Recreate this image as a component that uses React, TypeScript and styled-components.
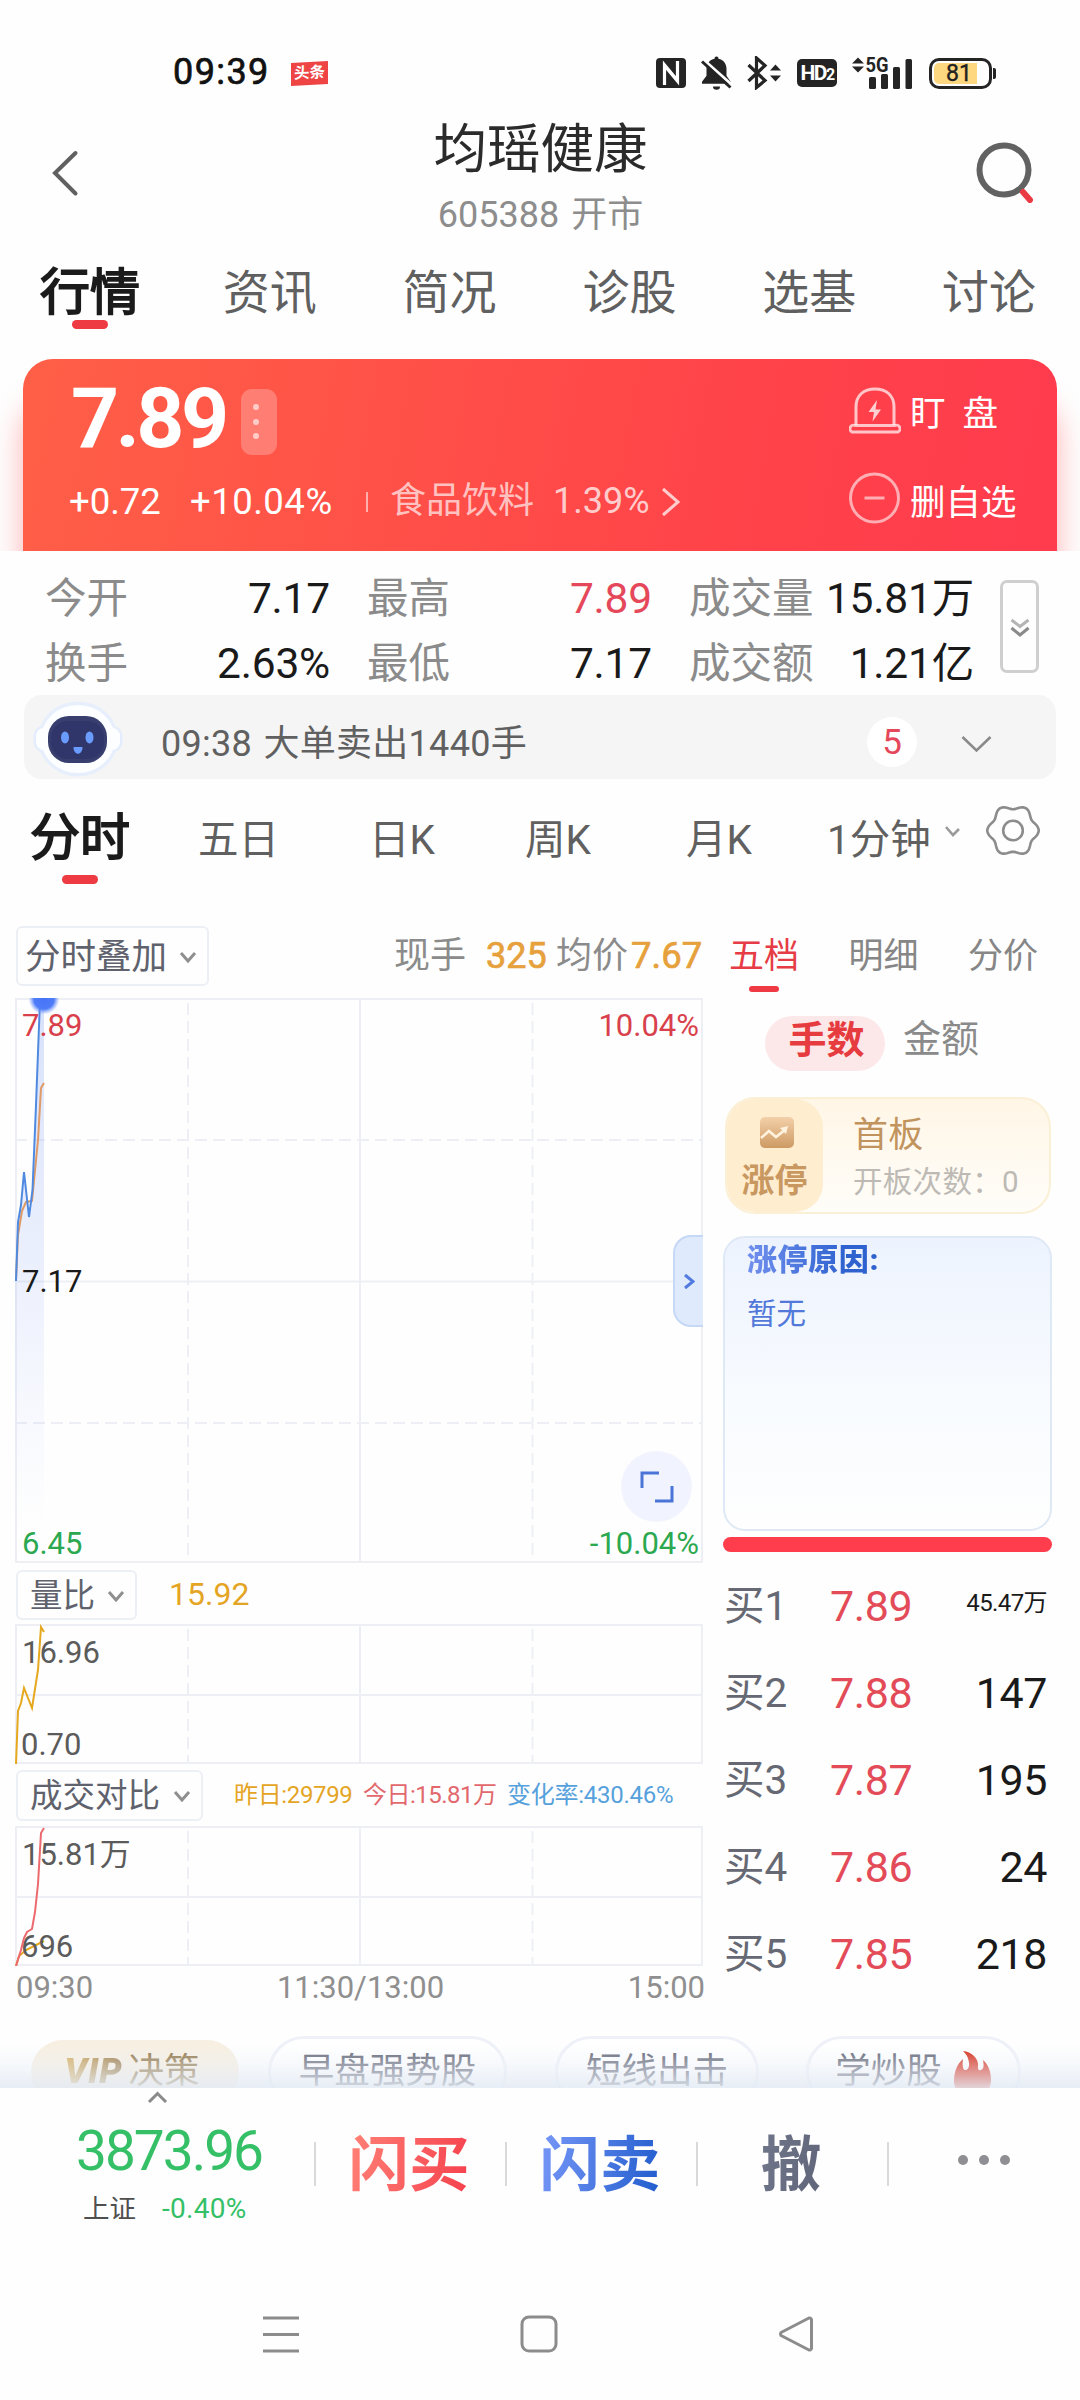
import React from "react";
import styled, { createGlobalStyle, css } from "styled-components";

const GlobalStyle = createGlobalStyle`
  * { box-sizing: border-box; }
  html, body { margin: 0; padding: 0; background: #fff; }
  body {
    width: 1080px;
    font-family: Roboto, "Noto Sans CJK SC", sans-serif;
    color: #1a1a1a;
  }
  svg { display: block; flex: none; }
`;

const Screen = styled.main`
  width: 1080px;
  height: 2400px;
  overflow: hidden;
  background: #fefefe;
  display: flex;
  flex-direction: column;
`;

interface TextProps {
  $size: number;
  $color?: string;
  $stroke?: number;
  $spacing?: number;
  $width?: number;
  $left?: number;
}

const Text = styled.span<TextProps>`
  display: block;
  flex: none;
  white-space: nowrap;
  line-height: 1.1;
  font-size: ${(p) => p.$size}px;
  color: ${(p) => p.$color ?? "#1a1a1a"};
  letter-spacing: ${(p) => p.$spacing ?? 0}px;
  margin-left: ${(p) => p.$left ?? 0}px;
  ${(p) => p.$stroke && css`-webkit-text-stroke: ${p.$stroke}px currentColor;`}
  ${(p) => p.$width && css`width: ${p.$width}px;`}
`;

/* ---------- status bar ---------- */

const StatusBar = styled.header`
  height: 110px;
  padding: 36px 84px 0 173px;
  display: flex;
  align-items: center;
  justify-content: space-between;
`;
const StatusGroup = styled.div<{ $gap: number }>`
  display: flex;
  align-items: center;
  gap: ${(p) => p.$gap}px;
`;
const NewsBadge = styled.div`
  width: 37px;
  height: 23px;
  margin-left: 20px;
  background: #ee4444;
  color: #fff;
  font-size: 15.5px;
  font-weight: 700;
  line-height: 23px;
  text-align: center;
  transform: skewY(-3deg);
`;
const HdBadge = styled.div`
  width: 40px;
  height: 28px;
  margin-left: 1px;
  border-radius: 5px;
  background: #242424;
  color: #fff;
  font-size: 21px;
  font-weight: 700;
  line-height: 29px;
  text-align: center;
  letter-spacing: -1.5px;
  small { font-size: 16px; }
`;
const Battery = styled.div`
  position: relative;
  width: 63px;
  height: 31px;
  margin-right: 4px;
  border: 3px solid #242424;
  border-radius: 10px;
  padding: 2px;
  &::after {
    content: "";
    position: absolute;
    right: -7px;
    top: 7px;
    width: 3px;
    height: 11px;
    border-radius: 0 2px 2px 0;
    background: #242424;
  }
`;
const BatteryLevel = styled.div`
  width: 43px;
  height: 21px;
  border-radius: 5px 0 0 5px;
  background: #fdd880;
  font-size: 23px;
  -webkit-text-stroke: 0.4px currentColor;
  line-height: 22px;
  padding-left: 12px;
  color: #222;
`;

/* ---------- title ---------- */

const TitleBar = styled.div`
  height: 135px;
  padding: 11px 46px 0 52px;
  display: flex;
  justify-content: space-between;
`;
const TitleBlock = styled.div`
  margin-left: 26px;
  padding-top: 1px;
  display: flex;
  flex-direction: column;
  align-items: center;
`;
const Title = styled.h1`
  margin: 0;
  font-size: 53.500px;
  font-weight: 400;
  line-height: 56px;
  color: #2b2b2b;
`;
const SubTitle = styled.div`
  margin-top: 17px;
  font-size: 36px;
  line-height: 40px;
  color: #8d8d8d;
  word-spacing: 3px;
`;
const BackIcon = styled.svg`margin-top: 28px;`;
const SearchIcon = styled.svg`margin-top: 20px;`;

/* ---------- top tabs ---------- */

const Tabs = styled.nav`
  height: 100px;
  padding: 18px 1px 0 0;
  display: grid;
  grid-template-columns: repeat(6, 1fr);
`;
const Tab = styled.div<{ $active?: boolean }>`
  display: flex;
  flex-direction: column;
  align-items: center;
  line-height: 60px;
  font-size: ${(p) => (p.$active ? 50 : 47)}px;
  -webkit-text-stroke: ${(p) => (p.$active ? 1.8 : 0)}px currentColor;
  color: ${(p) => (p.$active ? "#1b1b1b" : "#606060")};
`;
const Underline = styled.i<{ $w?: number; $h?: number; $top?: number }>`
  width: ${(p) => p.$w ?? 36}px;
  height: ${(p) => p.$h ?? 9}px;
  margin-top: ${(p) => p.$top ?? -3}px;
  border-radius: 5px;
  background: #ee3a42;
`;

/* ---------- price card ---------- */

const CardClip = styled.section`
  height: 206px;
  padding: 14px 23px 0;
  overflow: hidden;
`;
const PriceCard = styled.div`
  height: 220px;
  border-radius: 30px;
  background: linear-gradient(100deg, #ff5f47 0%, #ff5148 35%, #ff4349 68%, #ff3b4e 100%);
  box-shadow: 0 44px 30px 0 rgba(255, 70, 75, 0.42);
  display: flex;
  justify-content: space-between;
  padding: 0 0 0 48px;
`;
const PriceLeft = styled.div`padding-top: 30px;`;
const PriceRow = styled.div`
  height: 66px;
  display: flex;
  align-items: flex-start;
`;
const Price = styled.div`
  width: 170px;
  padding-top: 1px;
  font-size: 84px;
  font-weight: 700;
  line-height: 57px;
  letter-spacing: -3.6px;
  color: #fff;
`;
const MoreButton = styled.div`
  width: 36px;
  height: 66px;
  padding: 15px 6px 16px 0;
  border-radius: 11px;
  background: rgba(255, 255, 255, 0.24);
  display: flex;
  flex-direction: column;
  align-items: center;
  justify-content: space-between;
  i { width: 6px; height: 6px; border-radius: 50%; background: rgba(255, 255, 255, 0.6); }
`;
const ChangeRow = styled.div`
  height: 40px;
  margin-top: 27px;
  margin-left: -2px;
  display: flex;
  align-items: center;
`;
const ChangeDivider = styled.i`
  width: 2px;
  height: 20px;
  margin: 0 22px 0 31px;
  background: rgba(255, 255, 255, 0.55);
`;
const PriceRight = styled.div`
  width: 208px;
  padding-top: 26px;
`;
const CardAction = styled.div<{ $top?: number; $textTop?: number; $word?: number }>`
  height: 52px;
  margin-top: ${(p) => p.$top ?? 0}px;
  display: flex;
  align-items: center;
  gap: 9px;
  font-size: 35.5px;
  line-height: 40px;
  color: #fff;
  span { margin-top: ${(p) => p.$textTop ?? 0}px; letter-spacing: ${(p) => p.$word ?? 0}px; white-space: nowrap; }
`;

/* ---------- stats ---------- */

const Stats = styled.section`
  height: 144px;
  padding: 15px 41px 0 45px;
  display: flex;
  justify-content: space-between;
`;
const StatGrid = styled.div`
  display: grid;
  grid-template-columns: 110px 175px 37px 110px 175px 37px 124px 161px;
  grid-template-rows: 65px 65px;
  align-items: center;
  line-height: 48px;
`;
const StatLabel = styled.span`
  padding-top: 1px;
  font-size: 41.500px;
  color: #8b8b8b;
  white-space: nowrap;
`;
const StatValue = styled.span<{ $red?: boolean }>`
  font-size: 42.500px;
  text-align: right;
  white-space: nowrap;
  letter-spacing: -0.2px;
  color: ${(p) => (p.$red ? "#e4485a" : "#1a1a1a")};
`;
const ExpandButton = styled.div`
  width: 39px;
  height: 93px;
  margin-top: 14px;
  border: 3px solid #cfcfcf;
  border-radius: 7px;
  display: flex;
  align-items: center;
  justify-content: center;
`;

/* ---------- robot bar ---------- */

const RobotBar = styled.section`
  height: 84px;
  flex: none;
  margin: 0 24px;
  padding: 0 64px 0 9px;
  border-radius: 18px;
  background: #f5f5f5;
  display: flex;
  align-items: center;
`;
const RobotText = styled.div`
  flex: 1;
  margin: 13px 0 0 38px;
  font-size: 36px;
  line-height: 40px;
  letter-spacing: 0.3px;
  word-spacing: 2px;
  color: #606060;
`;
const CountBadge = styled.div`
  width: 50px;
  height: 50px;
  margin: 10px 44px 0 0;
  border-radius: 50%;
  background: #fff;
  color: #e4485a;
  font-size: 35px;
  line-height: 51px;
  text-align: center;
`;
const RobotChevron = styled.svg`margin-top: 14px;`;

/* ---------- period tabs ---------- */

const Periods = styled.nav`
  height: 126px;
  flex: none;
  padding: 32px 0 0 30px;
  display: flex;
  color: #606060;
`;
const ActivePeriod = styled.div`
  width: 168px;
  font-size: 50px;
  -webkit-text-stroke: 1.8px currentColor;
  line-height: 54px;
  color: #1b1b1b;
  display: flex;
  flex-direction: column;
  i { margin-left: 32px; }
`;
const Period = styled.div<{ $w: number }>`
  width: ${(p) => p.$w}px;
  font-size: 40.500px;
  line-height: 58px;
  white-space: nowrap;
`;
const PeriodCaret = styled.svg`margin-top: 14px;`;
const GearSlot = styled.div`
  height: 53px;
  margin: -7px 0 0 -1px;
`;

/* ---------- main area ---------- */

const Main = styled.div`
  height: 1115px;
  flex: none;
  display: flex;
  padding: 0 0 0 16px;
`;
const ChartColumn = styled.div`
  width: 707px;
  padding-top: 21px;
`;
const ToolRow = styled.div<{ $h: number; $after: number }>`
  width: 688px;
  height: ${(p) => p.$h}px;
  margin-bottom: ${(p) => p.$after}px;
  display: flex;
  align-items: center;
`;
const SelectBox = styled.div<{ $w: number; $size: number; $pad: number }>`
  flex: none;
  width: ${(p) => p.$w}px;
  height: 100%;
  padding: 1px 10px 0 ${(p) => p.$pad}px;
  border: 2px solid #eceff4;
  border-radius: 6px;
  display: flex;
  align-items: center;
  justify-content: space-between;
  font-size: ${(p) => p.$size}px;
  line-height: 40px;
  color: #5f626d;
  white-space: nowrap;
`;
const Quote = styled.div`
  margin-left: auto;
  padding-top: 1px;
  display: flex;
  align-items: center;
`;
const ChartFrame = styled.div<{ $h: number; $after?: number }>`
  position: relative;
  left: -1px;
  width: 688px;
  height: ${(p) => p.$h}px;
  margin-bottom: ${(p) => p.$after ?? 0}px;
`;
const DrawerHandle = styled.div`
  position: absolute;
  right: 0;
  top: 237px;
  width: 30px;
  height: 92px;
  border: 2px solid #c5d8f5;
  border-right: 0;
  border-radius: 18px 0 0 18px;
  background: #dfeafc;
  display: flex;
  align-items: center;
  justify-content: center;
`;
const FullscreenButton = styled.div`
  position: absolute;
  left: 606px;
  top: 453px;
  width: 71px;
  height: 71px;
  border-radius: 50%;
  background: #f1f4fe;
  display: flex;
  align-items: center;
  justify-content: center;
`;
const AxisRow = styled.div`
  width: 689px;
  height: 36px;
  margin-top: 4px;
  display: flex;
  justify-content: space-between;
  font-size: 31px;
  line-height: 36px;
  color: #8f8f8f;
`;

const BookColumn = styled.aside`
  width: 329px;
  padding-top: 28px;
`;
const BookTabs = styled.div`
  height: 80px;
  padding: 0 14px 0 6px;
  display: flex;
  justify-content: space-between;
`;
const BookTab = styled.div<{ $active?: boolean }>`
  display: flex;
  flex-direction: column;
  align-items: center;
  font-size: 35px;
  line-height: 48px;
  color: ${(p) => (p.$active ? "#e63c46" : "#868686")};
`;
const UnitSwitch = styled.div`
  height: 56px;
  padding-left: 42px;
  display: flex;
  gap: 18px;
  line-height: 53px;
  font-size: 38px;
  color: #8a8a8a;
`;
const UnitPill = styled.div`
  width: 120px;
  height: 55px;
  margin-top: 3px;
  padding-left: 3px;
  border-radius: 28px;
  background: #fde8e9;
  color: #e63c40;
  font-weight: 700;
  line-height: 49px;
  text-align: center;
`;
const LimitCard = styled.div`
  height: 117px;
  margin: 28px 1px 22px 2px;
  border: 2px solid #fbf0d6;
  border-radius: 30px;
  background: linear-gradient(#fff6e6, #fffdf9);
  display: flex;
  overflow: hidden;
`;
const LimitBadge = styled.div`
  width: 97px;
  margin-left: -1px;
  border-radius: 28px;
  background: #ffedd0;
  display: flex;
  flex-direction: column;
  align-items: center;
  padding-top: 18px;
  font-size: 33px;
  font-weight: 700;
  line-height: 36px;
  color: #c89860;
  svg { margin: 0 0 15px 4px; }
`;
const LimitInfo = styled.div`
  padding: 14px 0 0 30px;
  font-size: 29.5px;
  line-height: 44px;
  letter-spacing: 0.3px;
  color: #bdbab5;
  white-space: nowrap;
  b { display: block; font-weight: 400; font-size: 35px; line-height: 45px; color: #c1935d; margin-bottom: 2px; }
`;
const ReasonCard = styled.div`
  height: 295px;
  padding: 4px 0 0 22px;
  border: 2px solid #dfe9f6;
  border-radius: 22px;
  background: linear-gradient(#edf3fe, #f8fbff 55%, #fefefe);
`;
const ReasonTitle = styled.div`
  width: max-content;
  font-size: 30px;
  font-weight: 900;
  line-height: 36px;
  letter-spacing: 0.6px;
  background: linear-gradient(90deg, #7190ee, #2e62cf 75%);
  -webkit-background-clip: text;
  background-clip: text;
  color: transparent;
`;
const ReasonBody = styled.div`
  margin-top: 18px;
  font-size: 29.5px;
  line-height: 36px;
  color: #5279d9;
`;
const StrengthBar = styled.div`
  height: 15px;
  margin: 6px 0 10px;
  border-radius: 8px;
  background: #ff3d4d;
`;
const BookRow = styled.div`
  height: 87px;
  padding: 0 5px 0 1px;
  display: grid;
  grid-template-columns: 106px 90px 1fr;
  align-items: center;
  line-height: 48px;
  font-size: 43px;
  white-space: nowrap;
`;
const BookLabel = styled.span`
  padding-top: 1px;
  font-size: 40.500px;
  color: #666973;
`;
const BookPrice = styled.span`
  color: #e34b58;
  letter-spacing: -0.4px;
`;
const BookQty = styled.span<{ $small?: boolean }>`
  text-align: right;
  font-size: ${(p) => (p.$small ? 24 : 43)}px;
  margin-top: ${(p) => (p.$small ? -6 : 0)}px;
  letter-spacing: ${(p) => (p.$small ? -0.6 : -0.4)}px;
`;

/* ---------- promo pills ---------- */

const Promos = styled.div`
  position: relative;
  height: 68px;
  flex: none;
  overflow: hidden;
  padding: 16px 0 0 31px;
  display: flex;
  &::after {
    content: "";
    position: absolute;
    inset: 24px 0 0;
    background: linear-gradient(rgba(240, 244, 250, 0), rgba(236, 241, 248, 0.42) 45%, rgba(228, 235, 244, 0.88));
  }
`;
const Promo = styled.div<{ $w: number; $after?: number; $vip?: boolean }>`
  flex: none;
  width: ${(p) => p.$w}px;
  height: ${(p) => (p.$vip ? 64 : 72)}px;
  margin-top: ${(p) => (p.$vip ? 4 : 0)}px;
  margin-right: ${(p) => p.$after ?? 0}px;
  padding-top: ${(p) => (p.$vip ? 11 : 12)}px;
  border-radius: 36px;
  border: ${(p) => (p.$vip ? "0" : "3px solid #eff1f8")};
  background: ${(p) => (p.$vip ? "#f7efe1" : "#fff")};
  color: ${(p) => (p.$vip ? "#8c7040" : "#5c6070")};
  font-size: 35.5px;
  line-height: 40px;
  display: flex;
  justify-content: center;
  white-space: nowrap;
`;
const VipMark = styled.b`
  padding-right: 3px;
  margin-right: 3px;
  margin-left: -6px;
  font-style: italic;
  font-weight: 900;
  letter-spacing: 0.8px;
  background: linear-gradient(90deg, #d8ad55, #8c6c3c);
  -webkit-background-clip: text;
  background-clip: text;
  color: transparent;
`;
const FlameSlot = styled.div`
  margin-left: 12px;
`;

/* ---------- bottom bar ---------- */

const BottomBar = styled.footer`
  height: 190px;
  flex: none;
  display: flex;
  padding-top: 3px;
`;
const IndexBlock = styled.div`
  width: 314px;
  padding-left: 76px;
`;
const IndexCaret = styled.svg`margin-left: 71px;`;
const IndexValue = styled.div`
  margin-top: 17px;
  font-size: 55px;
  line-height: 62px;
  letter-spacing: -2px;
  color: #35c067;
`;
const IndexSub = styled.div`
  margin: 11px 0 0 7px;
  display: flex;
  gap: 26px;
  font-size: 26.500px;
  line-height: 32px;
  color: #4f4f4f;
  span + span { color: #35c067; font-size: 28px; letter-spacing: 0.3px; }
`;
const TradeCell = styled.div<{ $from?: string; $to?: string }>`
  width: 191px;
  height: 44px;
  margin-top: 51px;
  border-left: 2px solid #d9d9d9;
  display: flex;
  align-items: center;
  justify-content: center;
  span {
    font-size: 60.500px;
    font-weight: 700;
    line-height: 76px;
    margin: 4px 3px 0 0;
    background: linear-gradient(100deg, ${(p) => p.$from ?? "#707689"}, ${(p) => p.$to ?? "#606579"});
    -webkit-background-clip: text;
    background-clip: text;
    color: transparent;
  }
`;
const Dots = styled.div`
  display: flex;
  gap: 11px;
  margin: -8px 0 0 0;
  i { width: 10px; height: 10px; border-radius: 50%; background: #8f8f93; }
`;
const SystemNav = styled.div`
  height: 112px;
  flex: none;
  padding: 0 265px 0 262px;
  display: flex;
  align-items: center;
  justify-content: space-between;
`;

/* ---------- drawings ---------- */

type Dir = "down" | "right";
const Chevron = ({ w, h, dir = "down", color = "#8f8f8f", sw = 3 }: { w: number; h: number; dir?: Dir; color?: string; sw?: number }) => (
  <svg width={w} height={h} fill="none" stroke={color} strokeWidth={sw}>
    <path d={dir === "down" ? `M2 2 L${w / 2} ${h - 2} L${w - 2} 2` : `M2 2 L${w - 2} ${h / 2} L2 ${h - 2}`} />
  </svg>
);

const NfcIcon = () => (
  <svg width="30" height="30" viewBox="0 0 30 30">
    <rect width="30" height="30" rx="4" fill="#242424" />
    <path d="M8.500 27V7L19 19.500M21.500 3v20L11 10.500" fill="none" stroke="#fff" strokeWidth="3.200" />
  </svg>
);
const MutedBell = () => (
  <svg width="31" height="34" viewBox="0 0 31 34">
    <path d="M15.500 0.500a2 2 0 0 1 2 2.200c5 1 8 5 8 10v7l4.500 6.500v1.500H1v-2l4.500-6v-7c0-5 3-9 8-10a2 2 0 0 1 2-2.200z" fill="#242424" />
    <path d="M12 30.500h7a3.500 3.300 0 0 1-7 0z" fill="#242424" />
    <path d="M3.500 4.500L31 29" stroke="#fff" strokeWidth="3" />
    <path d="M1 5.500L29.500 31.500" stroke="#242424" strokeWidth="3" />
  </svg>
);
const BluetoothIcon = () => (
  <svg width="34" height="34" viewBox="0 0 34 34">
    <path d="M1.500 9L18 24.500 9.500 31.500V2L18 9.500 1.500 25" fill="none" stroke="#242424" strokeWidth="3.200" />
    <path d="M23 14.500l5.500-6 5.500 6zM23 19.500l5.500 6 5.500-6z" fill="#242424" />
  </svg>
);
const SignalIcon = () => (
  <svg width="62" height="34" viewBox="0 0 62 34" overflow="visible">
    <path d="M0 7.500l6-6 6 6zM0 10.500l6 6 6-6z" fill="#242424" />
    <text x="13.500" y="16" fontSize="20" fontWeight="700" textLength="23" lengthAdjust="spacingAndGlyphs" fill="#242424">5G</text>
    <rect x="17" y="21" width="7" height="12" rx="1.500" fill="#242424" />
    <rect x="29" y="18" width="7" height="15" rx="1.500" fill="#242424" />
    <rect x="41" y="11" width="7" height="22" rx="1.500" fill="#242424" />
    <rect x="53.500" y="3" width="6.500" height="30" rx="1.500" fill="#242424" />
  </svg>
);
const AlarmIcon = () => (
  <svg width="52" height="50" viewBox="0 0 52 50" fill="none" stroke="rgba(255,255,255,.7)" strokeWidth="3">
    <path d="M7 39V21C7 9 15 3 26 3s19 6 19 18v18" />
    <path d="M6 39.500h40a3.500 3.500 0 0 1 3 6.500H3a3.500 3.500 0 0 1 3-6.500z" />
    <path d="M28 14l-8.500 12h5.500l-1.500 9.500 8.500-12h-5.500z" fill="rgba(255,255,255,.75)" stroke="none" />
  </svg>
);
const MinusIcon = () => (
  <svg width="52" height="52" viewBox="0 0 52 52" fill="none" stroke="rgba(255,255,255,.58)" strokeWidth="3">
    <circle cx="25.500" cy="26" r="24" />
    <path d="M15.500 26h20" />
  </svg>
);
const Robot = () => (
  <svg width="90" height="80" viewBox="0 0 90 80">
    <rect x="0.500" y="28" width="89" height="28" rx="12" fill="#e4edfd" />
    <ellipse cx="45" cy="42" rx="40" ry="37.500" fill="#e7effd" />
    <rect x="3" y="31" width="84" height="22" rx="8" fill="#fdfeff" />
    <ellipse cx="45" cy="42" rx="37" ry="34" fill="#fdfeff" />
    <rect x="15" y="19" width="59" height="47" rx="21" fill="#383e6e" />
    <rect x="18" y="24" width="53" height="38" rx="17" fill="#30366a" />
    <ellipse cx="32" cy="40.500" rx="4" ry="6" fill="#6a9bff" />
    <ellipse cx="56.500" cy="40.500" rx="4" ry="6" fill="#6a9bff" />
    <path d="M40.500 50h9c0 9-9 9-9 0z" fill="#6a9bff" />
  </svg>
);
const gearPath = (() => {
  const pts: string[] = [];
  for (let i = 0; i <= 120; i++) {
    const a = (i / 120) * Math.PI * 2;
    const r = 23.5 + 2.2 * Math.cos(6 * a);
    pts.push(`${(27 + r * Math.cos(a)).toFixed(1)} ${(26.5 + r * Math.sin(a)).toFixed(1)}`);
  }
  return `M${pts.join("L")}Z`;
})();
const GearIcon = () => (
  <svg width="54" height="53" viewBox="0 0 54 53" fill="none" stroke="#8c8c8c" strokeWidth="2.600">
    <path d={gearPath} />
    <circle cx="27" cy="26.500" r="9.800" />
  </svg>
);
const TrendIcon = () => (
  <svg width="34" height="31" viewBox="0 0 34 31">
    <defs>
      <linearGradient id="trend" x1="0" y1="0" x2="0" y2="1">
        <stop offset="0" stopColor="#f3d0a9" />
        <stop offset="1" stopColor="#cd9a63" />
      </linearGradient>
    </defs>
    <rect width="34" height="31" rx="5" fill="url(#trend)" />
    <path d="M1 21l8-7 7 6 10-8" fill="none" stroke="#fff3df" strokeWidth="2.600" />
    <path d="M20 11l8-2-2 8z" fill="#fff3df" />
  </svg>
);
const Flame = () => (
  <svg width="38" height="48" viewBox="0 0 38 48">
    <path d="M9 0c9 1 16 8 15 15-.5 3 1 5 3 4 3-1 3-5 2-10 6 5 8 13 8 20 0 10-8 18-18 18S0 40 0 30C0 20 4 12 9 8c-1 6 0 12 3 11 5-1 4-13-3-19z" fill="#d6230f" />
  </svg>
);

/* ---------- charts ---------- */

const GRID = "#edeff4";

const Grid = ({ h, quarter }: { h: number; quarter?: boolean }) => (
  <g stroke={GRID} strokeWidth="2" fill="none">
    <path d={`M1 1H687V${h - 1}H1ZM345 1V${h}M1 ${h / 2 + 1}H687`} />
    <path d={`M173 4V${h}M517.500 4V${h}`} strokeDasharray="12 6" strokeDashoffset="-1" />
    {quarter && <path d={`M0 142H688M0 425H688`} strokeDasharray="12 6" />}
  </g>
);

interface TagProps { x: number; y: number; color: string; end?: boolean; children: string }
const Tag = ({ x, y, color, end, children }: TagProps) => (
  <text x={x} y={y} fontSize="31" fill={color} textAnchor={end ? "end" : "start"}>{children}</text>
);

const PriceChart = () => (
  <svg width="688" height="565" viewBox="0 0 688 565">
    <defs>
      <linearGradient id="area" x1="0" y1="0" x2="0" y2="1">
        <stop offset="0" stopColor="#5b86f0" stopOpacity=".24" />
        <stop offset=".5" stopColor="#6f90f5" stopOpacity=".13" />
        <stop offset="1" stopColor="#8fa8ff" stopOpacity="0" />
      </linearGradient>
      <radialGradient id="pulse">
        <stop offset="0" stopColor="#4573f6" />
        <stop offset=".65" stopColor="#4f7df8" />
        <stop offset="1" stopColor="#7d9dfa" stopOpacity="0" />
      </radialGradient>
    </defs>
    <Grid h={565} quarter />
    <path d="M0 283L3 224 6 207 9 174 14 219 17.500 192 21 107 25 1H29V530H0Z" fill="url(#area)" />
    <path d="M1 282L3 237 7 213 11 204 17 203 23 142 26 90 29 85" fill="none" stroke="#df9a66" strokeWidth="2" />
    <path d="M1 283L3 224 6 207 9 174 14 219 17.500 192 21 107 25 2" fill="none" stroke="#4f8ae0" strokeWidth="2" />
    <circle cx="29" cy="1" r="15.500" fill="url(#pulse)" />
    <Tag x={7} y={38} color="#d8404c">7.89</Tag>
    <Tag x={684} y={38} color="#d8404c" end>10.04%</Tag>
    <Tag x={7} y={293.5} color="#1a1a1a">7.17</Tag>
    <Tag x={7} y={555.5} color="#2ba850">6.45</Tag>
    <Tag x={684} y={555.5} color="#2ba850" end>-10.04%</Tag>
  </svg>
);

const RatioChart = () => (
  <svg width="688" height="140" viewBox="0 0 688 140">
    <Grid h={140} />
    <Tag x={7} y={38.5} color="#5b5b5b">16.96</Tag>
    <Tag x={6} y={131} color="#5b5b5b">0.70</Tag>
    <path d="M1 140L3 87 6 79 9 64 17 84 23 46 26 3 29 8" fill="none" stroke="#e5a81e" strokeWidth="2" />
  </svg>
);

const VolumeChart = () => (
  <svg width="688" height="140" viewBox="0 0 688 140">
    <Grid h={140} />
    <Tag x={7} y={38.5} color="#5b5b5b">15.81万</Tag>
    <path d="M1 140L4 130 11 124 29 115" fill="none" stroke="#e5a81e" strokeWidth="2" />
    <Tag x={6} y={131} color="#5b5b5b">696</Tag>
    <path d="M1 140L6 124 9 112 12 106 17 103 20 86 23 58 26 7 29 2" fill="none" stroke="#ec6a6f" strokeWidth="2" />
  </svg>
);

/* ---------- data ---------- */

const tabs = ["行情", "资讯", "简况", "诊股", "选基", "讨论"];
const stats: [string, string, boolean?][][] = [
  [["今开", "7.17"], ["最高", "7.89", true], ["成交量", "15.81万"]],
  [["换手", "2.63%"], ["最低", "7.17"], ["成交额", "1.21亿"]],
];
const book: [string, string, string][] = [
  ["买1", "7.89", "45.47万"],
  ["买2", "7.88", "147"],
  ["买3", "7.87", "195"],
  ["买4", "7.86", "24"],
  ["买5", "7.85", "218"],
];

export default function App() {
  return (
    <Screen>
      <GlobalStyle />
      <StatusBar>
        <StatusGroup $gap={0}>
          <Text $size={36} $stroke={0.7} $spacing={1.4} $width={98} $color="#111">09:39</Text>
          <NewsBadge>头条</NewsBadge>
        </StatusGroup>
        <StatusGroup $gap={15}>
          <NfcIcon />
          <MutedBell />
          <BluetoothIcon />
          <HdBadge>HD<small>2</small></HdBadge>
          <SignalIcon />
          <Battery><BatteryLevel>81</BatteryLevel></Battery>
        </StatusGroup>
      </StatusBar>

      <TitleBar>
        <BackIcon width="27" height="48" fill="none" stroke="#606060" strokeWidth="4" strokeLinecap="round">
          <path d="M23.500 4L3 24 23.500 44.500" />
        </BackIcon>
        <TitleBlock>
          <Title>均瑶健康</Title>
          <SubTitle>605388 开市</SubTitle>
        </TitleBlock>
        <SearchIcon width="58" height="62" fill="none">
          <circle cx="28" cy="29" r="24.500" stroke="#626262" strokeWidth="6" />
          <path d="M47 51L54 59" stroke="#ea3b45" strokeWidth="6" strokeLinecap="round" />
        </SearchIcon>
      </TitleBar>

      <Tabs>
        {tabs.map((t, i) => (
          <Tab key={t} $active={i === 0}>
            {t}
            {i === 0 && <Underline />}
          </Tab>
        ))}
      </Tabs>

      <CardClip>
        <PriceCard>
          <PriceLeft>
            <PriceRow>
              <Price>7.89</Price>
              <MoreButton><i /><i /><i /></MoreButton>
            </PriceRow>
            <ChangeRow>
              <Text $size={36.5} $color="#fff" $width={121}>+0.72</Text>
              <Text $size={36.5} $spacing={0.5} $color="#fff" $width={145}>+10.04%</Text>
              <ChangeDivider />
              <Text $size={36} $color="rgba(255,255,255,.68)" $width={163}>食品饮料</Text>
              <Text $size={36} $color="rgba(255,255,255,.74)" $width={108}>1.39%</Text>
              <Chevron w={19} h={30} dir="right" color="rgba(255,255,255,.72)" />
            </ChangeRow>
          </PriceLeft>
          <PriceRight>
            <CardAction $textTop={5} $word={17}><AlarmIcon /><span>盯盘</span></CardAction>
            <CardAction $top={35} $textTop={10}><MinusIcon /><span>删自选</span></CardAction>
          </PriceRight>
        </PriceCard>
      </CardClip>

      <Stats>
        <StatGrid>
          {stats.map((row) =>
            row.map(([label, value, red], i) => (
              <React.Fragment key={label}>
                <StatLabel>{label}</StatLabel>
                <StatValue $red={red}>{value}</StatValue>
                {i < 2 && <span />}
              </React.Fragment>
            ))
          )}
        </StatGrid>
        <ExpandButton>
          <svg width="20" height="22" fill="none" strokeWidth="3">
            <path d="M1.500 4L10 10.500 18.500 4" stroke="#b5b5b5" />
            <path d="M1.500 12L10 19 18.500 12" stroke="#8a8a8a" />
          </svg>
        </ExpandButton>
      </Stats>

      <RobotBar>
        <Robot />
        <RobotText>09:38 大单卖出1440手</RobotText>
        <CountBadge>5</CountBadge>
        <RobotChevron width="31" height="18" fill="none" stroke="#8a8a8a" strokeWidth="2.600">
          <path d="M1.500 2L15.500 15.500 29.500 2" />
        </RobotChevron>
      </RobotBar>

      <Periods>
        <ActivePeriod>分时<Underline $top={10} /></ActivePeriod>
        <Period $w={171}>五日</Period>
        <Period $w={156}>日K</Period>
        <Period $w={161}>周K</Period>
        <Period $w={141}>月K</Period>
        <Period $w={118}>1分钟</Period>
        <PeriodCaret width="42" height="14" fill="none" stroke="#9a9a9a" strokeWidth="2.600">
          <path d="M1 2L8 10 14 4" />
        </PeriodCaret>
        <GearSlot><GearIcon /></GearSlot>
      </Periods>

      <Main>
        <ChartColumn>
          <ToolRow $h={60} $after={12}>
            <SelectBox $w={193} $size={35.5} $pad={7}>分时叠加<Chevron w={18} h={12} /></SelectBox>
            <Quote>
              <Text $size={36} $color="#8b8b8b" $width={92}>现手</Text>
              <Text $size={36} $stroke={0.7} $color="#e6a13c" $width={70}>325</Text>
              <Text $size={36} $color="#8b8b8b" $width={75}>均价</Text>
              <Text $size={36.5} $stroke={0.7} $color="#e6a13c" $width={73}>7.67</Text>
            </Quote>
          </ToolRow>
          <ChartFrame $h={565} $after={7}>
            <PriceChart />
            <DrawerHandle><Chevron w={12} h={17} dir="right" color="#527be0" /></DrawerHandle>
            <FullscreenButton>
              <svg width="34" height="32" fill="none" stroke="#4a74d8" strokeWidth="3">
                <path d="M2 17V2H19M15 30H32V15" />
              </svg>
            </FullscreenButton>
          </ChartFrame>
          <ToolRow $h={50} $after={4}>
            <SelectBox $w={121} $size={32.5} $pad={12}>量比<Chevron w={18} h={12} /></SelectBox>
            <Text $size={32} $color="#e5a524" $left={32}>15.92</Text>
          </ToolRow>
          <ChartFrame $h={140} $after={6}><RatioChart /></ChartFrame>
          <ToolRow $h={51} $after={5}>
            <SelectBox $w={187} $size={32.5} $pad={12}>成交对比<Chevron w={18} h={12} /></SelectBox>
            <Text $size={24} $spacing={-0.35} $color="#e5a524" $width={129} $left={31}>昨日:29799</Text>
            <Text $size={24} $spacing={-0.5} $color="#e2686d" $width={144}>今日:15.81万</Text>
            <Text $size={24} $spacing={-0.25} $color="#56a1dc">变化率:430.46%</Text>
          </ToolRow>
          <ChartFrame $h={140}><VolumeChart /></ChartFrame>
          <AxisRow><span>09:30</span><span>11:30/13:00</span><span>15:00</span></AxisRow>
        </ChartColumn>

        <BookColumn>
          <BookTabs>
            <BookTab $active>五档<Underline $w={30} $h={6} $top={5} /></BookTab>
            <BookTab>明细</BookTab>
            <BookTab>分价</BookTab>
          </BookTabs>
          <UnitSwitch>
            <UnitPill>手数</UnitPill>
            <span>金额</span>
          </UnitSwitch>
          <LimitCard>
            <LimitBadge><TrendIcon />涨停</LimitBadge>
            <LimitInfo><b>首板</b>开板次数：0</LimitInfo>
          </LimitCard>
          <ReasonCard>
            <ReasonTitle>涨停原因:</ReasonTitle>
            <ReasonBody>暂无</ReasonBody>
          </ReasonCard>
          <StrengthBar />
          {book.map(([label, price, qty], i) => (
            <BookRow key={label}>
              <BookLabel>{label}</BookLabel>
              <BookPrice>{price}</BookPrice>
              <BookQty $small={i === 0}>{qty}</BookQty>
            </BookRow>
          ))}
        </BookColumn>
      </Main>

      <Promos>
        <Promo $w={208} $after={29} $vip><VipMark>VIP</VipMark>决策</Promo>
        <Promo $w={239} $after={48}>早盘强势股</Promo>
        <Promo $w={204} $after={47}>短线出击</Promo>
        <Promo $w={215}>学炒股<FlameSlot><Flame /></FlameSlot></Promo>
      </Promos>

      <BottomBar>
        <IndexBlock>
          <IndexCaret width="21" height="12" fill="none" stroke="#8a8a8a" strokeWidth="3"><path d="M2 11L10.500 2.500 19 11" /></IndexCaret>
          <IndexValue>3873.96</IndexValue>
          <IndexSub><span>上证</span><span>-0.40%</span></IndexSub>
        </IndexBlock>
        <TradeCell $from="#ff8176" $to="#f5404d"><span>闪买</span></TradeCell>
        <TradeCell $from="#7898f8" $to="#1f5bcc"><span>闪卖</span></TradeCell>
        <TradeCell><span>撤</span></TradeCell>
        <TradeCell><Dots><i /><i /><i /></Dots></TradeCell>
      </BottomBar>

      <SystemNav>
        <svg width="38" height="38" stroke="#8c8c8c" strokeWidth="3"><path d="M1 3H37M1 19.500H37M1 36H37" /></svg>
        <svg width="38" height="38" fill="none" stroke="#8c8c8c" strokeWidth="3"><rect x="2" y="2" width="34" height="34" rx="7" /></svg>
        <svg width="38" height="38" fill="none" stroke="#8c8c8c" strokeWidth="3" strokeLinejoin="round"><path d="M32 3L4 17.500a2.500 2.500 0 0 0 0 3L32 35a2 2 0 0 0 2.500-1.500V4.500A2 2 0 0 0 32 3z" /></svg>
      </SystemNav>
    </Screen>
  );
}
